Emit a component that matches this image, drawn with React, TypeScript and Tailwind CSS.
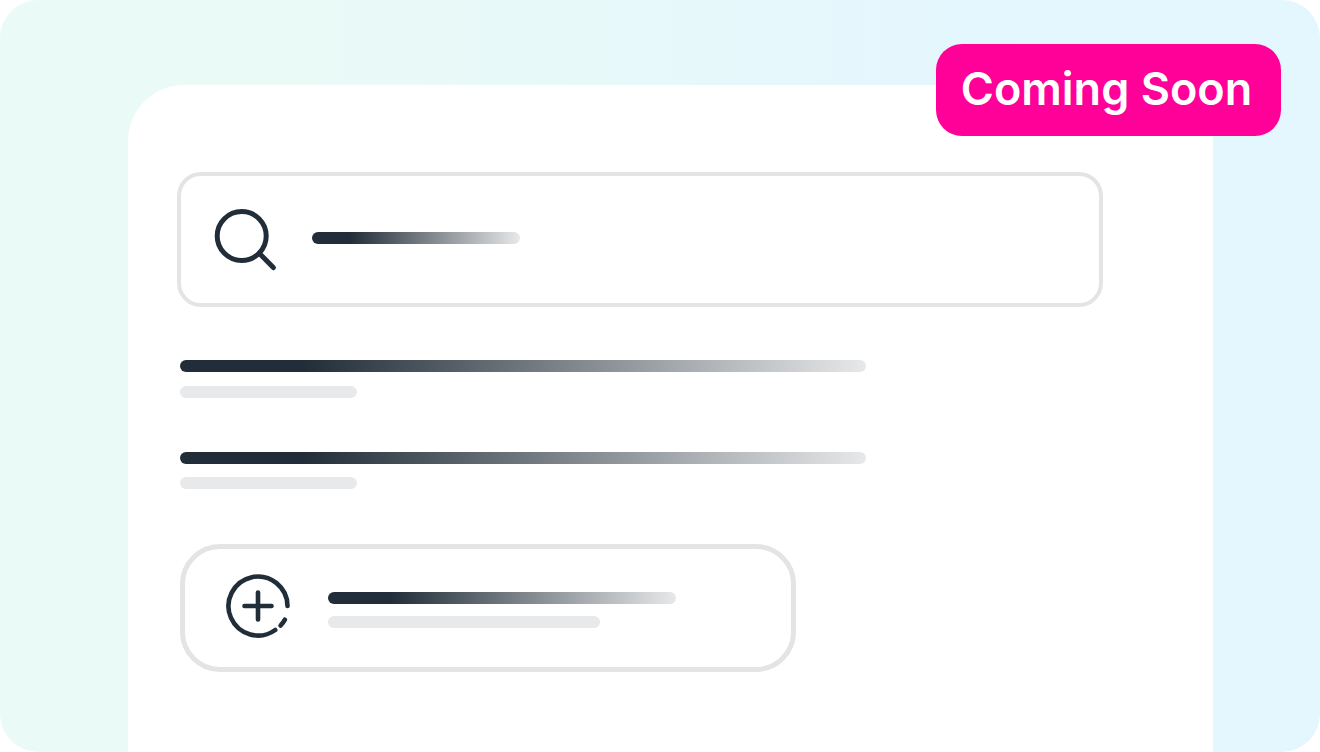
import React from "react";

function FadeBar({ className }: { className: string }) {
  return (
    <div
      className={`h-3 max-w-full rounded-full bg-[linear-gradient(90deg,#212d38_18%,#e7e8e9_100%)] ${className}`}
    />
  );
}

function MutedBar({ className }: { className: string }) {
  return <div className={`h-3 max-w-full rounded-full bg-[#e8e9eb] ${className}`} />;
}

function SearchIcon() {
  return (
    <svg
      className="size-16 shrink-0 overflow-visible"
      viewBox="0 0 64 64"
      fill="none"
      stroke="#212d38"
      strokeWidth="5"
      strokeLinecap="round"
      aria-hidden="true"
    >
      <circle cx="28.7" cy="30" r="24.5" />
      <path d="M46.5 47.5 60.3 61.6" />
    </svg>
  );
}

function AddIcon() {
  return (
    <svg
      className="size-16 shrink-0"
      viewBox="0 0 64 64"
      fill="none"
      stroke="#212d38"
      strokeWidth="4.6"
      strokeLinecap="round"
      aria-hidden="true"
    >
      <path d="M61.5 32A29.5 29.5 0 1 0 49.2 56" />
      <path d="M58.9 45.7Q57.2 48.8 54.6 51.5" />
      <path d="M32 18.5V45.5M18.5 32H45.5" />
    </svg>
  );
}

export default function App() {
  return (
    <main className="relative flex min-h-screen overflow-hidden rounded-[38px] bg-[linear-gradient(90deg,#e9faf7_24%,#e4f6fe_80%)] pt-[85px] pr-[107px] pl-32 font-[Inter,sans-serif]">
      <section className="min-w-0 flex-1 rounded-tl-[56px] bg-white pt-[87px]">
        <div className="pr-[110px] pl-[49px]">
          <label className="flex h-[135px] items-center rounded-3xl border-4 border-[#e4e4e4] pb-1 pl-8">
            <SearchIcon />
            <FadeBar className="ml-[35px] w-52" />
            <input
              type="search"
              aria-label="Search"
              className="min-w-0 flex-1 bg-transparent px-4 text-2xl outline-none"
            />
          </label>
        </div>

        <div className="px-[52px]">
          <ul className="mt-[53px] flex flex-col gap-[54px]">
            <li className="flex flex-col gap-[14px]">
              <FadeBar className="w-[686px]" />
              <MutedBar className="w-[177px]" />
            </li>
            <li className="flex flex-col gap-[13px]">
              <FadeBar className="w-[686px]" />
              <MutedBar className="w-[177px]" />
            </li>
          </ul>

          <button
            type="button"
            aria-label="Add"
            className="mt-[55px] flex h-32 w-[616px] max-w-full items-start rounded-[40px] border-5 border-[#e4e4e4] pt-[25px] pl-[41px]"
          >
            <AddIcon />
            <div className="ml-[38px] flex min-w-0 flex-1 flex-col gap-3 pt-[18px]">
              <FadeBar className="w-[348px]" />
              <MutedBar className="w-[272px]" />
            </div>
          </button>
        </div>
      </section>

      <div className="absolute top-11 right-[39px] flex h-[92px] w-[345px] items-center justify-center rounded-[26px] bg-[#ff0099] pr-1 pb-1 text-[45px] leading-none font-semibold whitespace-nowrap text-white">
        Coming Soon
      </div>
    </main>
  );
}
